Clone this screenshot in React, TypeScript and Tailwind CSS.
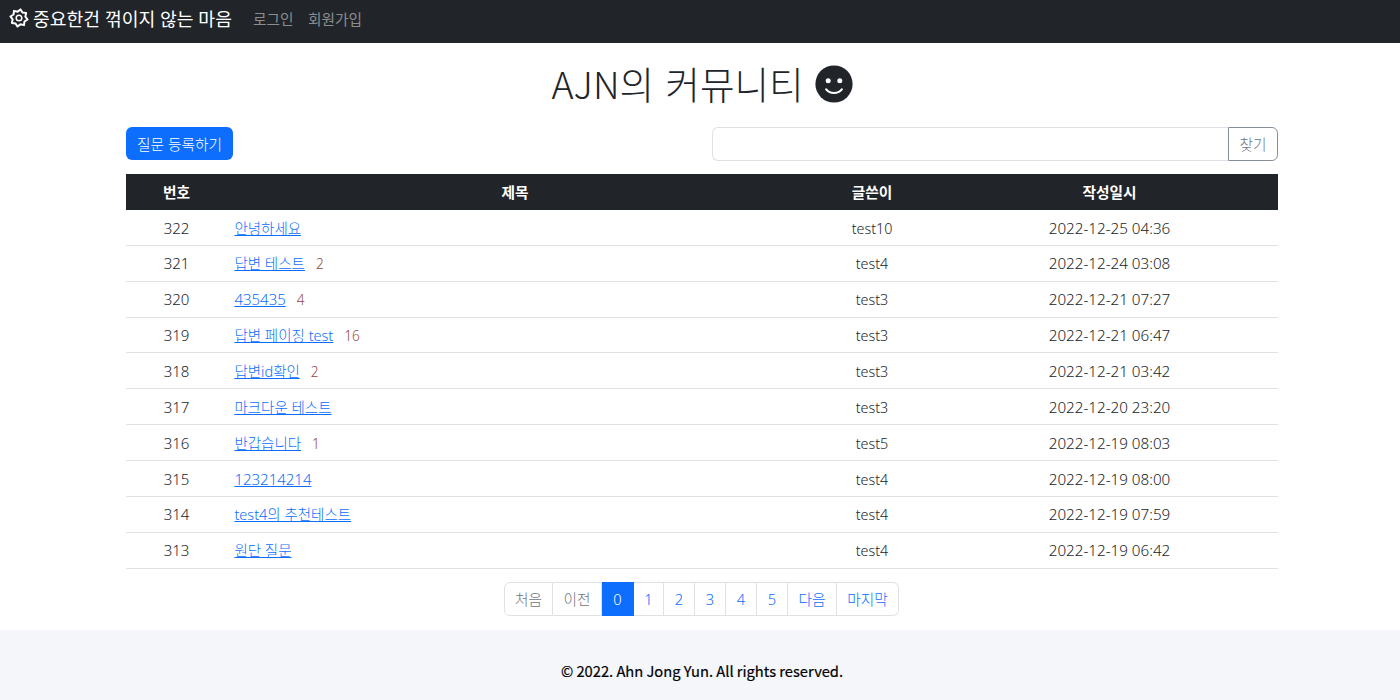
type Row = { id: number; title: string; replies?: number; author: string; date: string; numeric?: boolean };

const rows: Row[] = [
  { id: 322, title: "안녕하세요", author: "test10", date: "2022-12-25 04:36" },
  { id: 321, title: "답변 테스트", replies: 2, author: "test4", date: "2022-12-24 03:08" },
  { id: 320, title: "435435", replies: 4, author: "test3", date: "2022-12-21 07:27", numeric: true },
  { id: 319, title: "답변 페이징 test", replies: 16, author: "test3", date: "2022-12-21 06:47" },
  { id: 318, title: "답변id확인", replies: 2, author: "test3", date: "2022-12-21 03:42" },
  { id: 317, title: "마크다운 테스트", author: "test3", date: "2022-12-20 23:20" },
  { id: 316, title: "반갑습니다", replies: 1, author: "test5", date: "2022-12-19 08:03" },
  { id: 315, title: "123214214", author: "test4", date: "2022-12-19 08:00", numeric: true },
  { id: 314, title: "test4의 추천테스트", author: "test4", date: "2022-12-19 07:59" },
  { id: 313, title: "원단 질문", author: "test4", date: "2022-12-19 06:42" },
];

const pages = [
  { label: "처음", width: "w-[49px]", color: "text-[#6c757d] border-[#dee2e6]" },
  { label: "이전", width: "w-[49px]", color: "text-[#6c757d] border-[#dee2e6]" },
  { label: "0", width: "w-[32px]", color: "text-white bg-[#0d6efd] border-[#0d6efd]" },
  { label: "1", width: "w-[30px]", color: "text-[#0d6efd] border-[#dee2e6]" },
  { label: "2", width: "w-[31px]", color: "text-[#0d6efd] border-[#dee2e6]" },
  { label: "3", width: "w-[31px]", color: "text-[#0d6efd] border-[#dee2e6]" },
  { label: "4", width: "w-[31px]", color: "text-[#0d6efd] border-[#dee2e6]" },
  { label: "5", width: "w-[31px]", color: "text-[#0d6efd] border-[#dee2e6]" },
  { label: "다음", width: "w-[49px]", color: "text-[#0d6efd] border-[#dee2e6]" },
  { label: "마지막", width: "w-[62px]", color: "text-[#0d6efd] border-[#dee2e6]" },
];

const columns = "grid grid-cols-[101px_576px_138px_337px]";

const gearPoints = Array.from({ length: 16 }, (_, i) => {
  const radius = i % 2 === 0 ? 8.7 : 6.5;
  const angle = ((i * 22.5 + 10) * Math.PI) / 180;
  return `${(10 + radius * Math.sin(angle)).toFixed(2)},${(10 - radius * Math.cos(angle)).toFixed(2)}`;
}).join(" ");

function GearIcon() {
  return (
    <svg viewBox="0 0 20 20" className="h-5 w-5 shrink-0" fill="none" stroke="white">
      <polygon points={gearPoints} strokeWidth="2" strokeLinejoin="round" />
      <circle cx="10" cy="10" r="2.8" strokeWidth="1.5" />
    </svg>
  );
}

function SmileIcon() {
  return (
    <svg viewBox="0 0 38 38" className="h-[38px] w-[38px] shrink-0">
      <circle cx="19" cy="19" r="18.6" fill="#212529" />
      <circle cx="13.2" cy="15.7" r="2.5" fill="white" />
      <circle cx="24.8" cy="15.7" r="2.5" fill="white" />
      <path d="M11.2 24.4C15.2 29.2 22.8 29.2 26.8 24.4" fill="none" stroke="white" strokeWidth="2.2" strokeLinecap="round" />
    </svg>
  );
}

export default function App() {
  return (
    <div className="flex h-[700px] w-full flex-col overflow-hidden bg-white font-['Noto_Sans','Noto_Sans_CJK_KR',sans-serif] text-[15px] leading-[22px] font-light whitespace-nowrap text-[#212529]">
      <nav className="flex h-[43px] shrink-0 items-start bg-[#212529] pt-2 pl-[9px]">
        <GearIcon />
        <span className="ml-1 w-[220px] text-[18.25px] font-normal text-white">중요한건 꺾이지 않는 마음</span>
        <a className="w-[55px] text-[14.7px] font-normal text-[#8b8e90]">로그인</a>
        <a className="text-[14.7px] font-normal text-[#8b8e90]">회원가입</a>
      </nav>

      <main className="ml-[126px] flex h-[587px] w-[1152px] shrink-0 flex-col">
        <h1 className="mt-[15px] flex h-[52px] items-center justify-center font-['Noto_Sans_CJK_KR',sans-serif] text-[37.6px] leading-[50px] [word-spacing:3px]">
          <span className="pb-0.5">AJN의 커뮤니티</span>
          <span className="ml-[11px]">
            <SmileIcon />
          </span>
        </h1>

        <div className="mt-[17px] flex h-[33px] justify-between">
          <button className="h-[33px] w-[107px] rounded-md bg-[#0d6efd] text-[14.7px] text-white">질문 등록하기</button>
          <div className="flex w-[566px]">
            <input className="h-[34px] min-w-0 flex-1 rounded-l-md border border-r-0 border-[#dee2e6] outline-none" />
            <button className="h-[34px] w-[50px] rounded-r-md border border-[#868e96] text-[14.7px] text-[#6c757d]">찾기</button>
          </div>
        </div>

        <div className="mt-[14px]">
          <div className={`${columns} h-[36px] items-center bg-[#212529] text-center text-[14.7px] font-bold text-white`}>
            <span>번호</span>
            <span>제목</span>
            <span>글쓴이</span>
            <span>작성일시</span>
          </div>
          {rows.map((row) => (
            <div key={row.id} className={`${columns} h-[35.87px] items-baseline border-b border-[#dee2e6] pt-[6.5px] text-center`}>
              <span>{row.id}</span>
              <span className="flex items-baseline pl-[7.4px] text-left">
                <a className={`text-[#0d6efd] underline ${row.numeric ? "text-[15px]" : "text-[14.5px]"}`}>{row.title}</a>
                {row.replies !== undefined && <span className="ml-[11px] text-[13.6px] text-[#984840]">{row.replies}</span>}
              </span>
              <span className="text-[14.3px]">{row.author}</span>
              <span className="text-[15.2px]">{row.date}</span>
            </div>
          ))}
        </div>

        <div className="mt-[13.9px] flex h-[33.5px] justify-center pr-px">
          {pages.map((page) => (
            <a
              key={page.label}
              className={`flex h-[33.5px] items-center justify-center border-y border-r text-[14.7px] first:rounded-l-md first:border-l last:rounded-r-md ${page.width} ${page.color}`}
            >
              {page.label}
            </a>
          ))}
        </div>
      </main>

      <footer className="flex h-[70px] shrink-0 justify-center bg-[#f5f6fa] pt-[30px] pl-1 font-['Noto_Sans_CJK_KR',sans-serif] text-[14.7px] font-normal text-black">
        <span className="[-webkit-text-stroke:0.2px_black]">© 2022. Ahn Jong Yun. All rights reserved.</span>
      </footer>
    </div>
  );
}
